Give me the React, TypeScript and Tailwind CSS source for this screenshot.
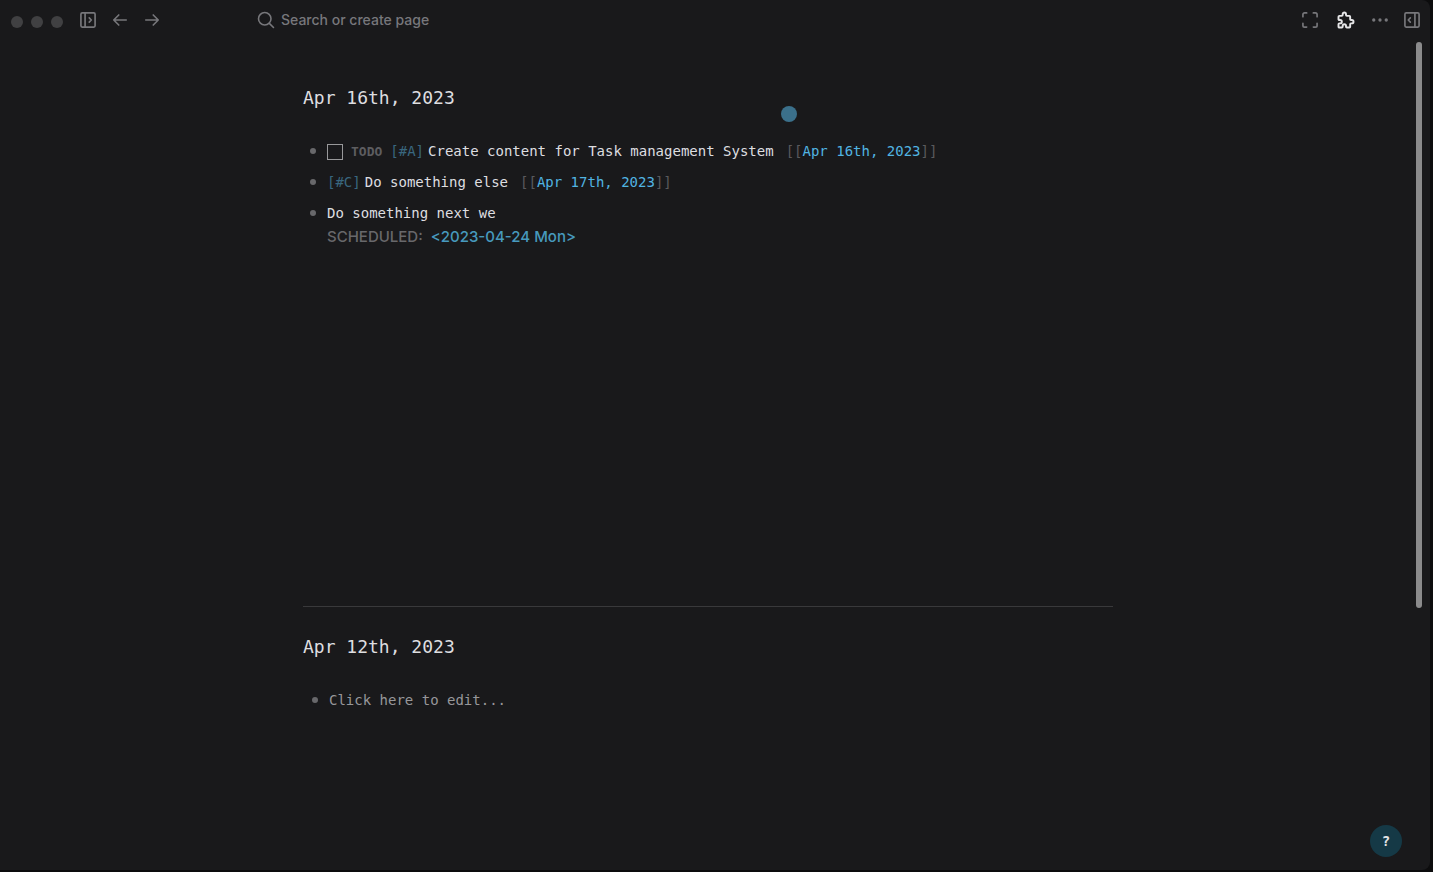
import type { ReactNode } from 'react';

const ICON = {
  fill: 'none',
  stroke: 'currentColor',
  strokeWidth: 2,
  strokeLinecap: 'round',
  strokeLinejoin: 'round',
  viewBox: '0 0 24 24',
  'aria-hidden': true,
} as const;

function IconButton({ label, children }: { label: string; children: ReactNode }) {
  return (
    <button type="button" aria-label={label} className="flex size-5 items-center justify-center">
      {children}
    </button>
  );
}

function Header() {
  return (
    <header className="flex h-10 items-center pr-2 pl-[11px] text-[#77777b]">
      <div className="flex w-[245px] items-center">
        <div className="mt-1 flex gap-2 text-[#404042]" aria-hidden="true">
          <span className="size-3 rounded-full bg-current" />
          <span className="size-3 rounded-full bg-current" />
          <span className="size-3 rounded-full bg-current" />
        </div>
        <nav className="ml-[15px] flex gap-3">
          <IconButton label="Toggle left sidebar">
            <svg {...ICON} className="size-5">
              <rect x="3.5" y="3.5" width="17" height="17" rx="1.5" />
              <path d="M8.5 3.5v17M13.5 9.5l2.5 2.5l-2.5 2.5" />
            </svg>
          </IconButton>
          <IconButton label="Go back">
            <svg {...ICON} className="size-5">
              <path d="M19.5 12H4.5M10.5 6L4.5 12l6 6" />
            </svg>
          </IconButton>
          <IconButton label="Go forward">
            <svg {...ICON} className="size-5">
              <path d="M4.5 12h15M13.5 6L19.5 12l-6 6" />
            </svg>
          </IconButton>
        </nav>
      </div>
      <button type="button" className="flex items-center gap-[5px] font-[Inter,sans-serif] text-sm font-medium">
        <svg {...ICON} className="size-5" strokeWidth={1.9}>
          <circle cx="10.5" cy="10.5" r="7.5" />
          <path d="M21 21L16 16" />
        </svg>
        Search or create page
      </button>
      <div className="ml-auto flex items-center gap-3">
        <IconButton label="Full screen">
          <svg {...ICON} className="size-5">
            <path d="M3.5 8V5.5a2 2 0 0 1 2-2H8M16 3.5h2.5a2 2 0 0 1 2 2V8M20.5 16v2.5a2 2 0 0 1-2 2H16M8 20.5H5.500a2 2 0 0 1-2-2V16" />
          </svg>
        </IconButton>
        <span className="mr-0.5 ml-1 flex text-[#e6e6e8]">
          <IconButton label="Plugins">
            <svg {...ICON} strokeWidth={2.3} className="size-5">
              <path d="M4 7h3a1 1 0 0 0 1-1V5a2 2 0 0 1 4 0v1a1 1 0 0 0 1 1h3a1 1 0 0 1 1 1v3a1 1 0 0 0 1 1h1a2 2 0 0 1 0 4h-1a1 1 0 0 0-1 1v3a1 1 0 0 1-1 1h-3a1 1 0 0 1-1-1v-1a2 2 0 0 0-4 0v1a1 1 0 0 1-1 1H4a1 1 0 0 1-1-1v-3a1 1 0 0 1 1-1h1a2 2 0 0 0 0-4H4a1 1 0 0 1-1-1V8a1 1 0 0 1 1-1" />
            </svg>
          </IconButton>
        </span>
        <IconButton label="More">
          <svg viewBox="0 0 24 24" className="size-5" fill="currentColor" aria-hidden="true">
            <circle cx="4.5" cy="12" r="2" />
            <circle cx="12" cy="12" r="2" />
            <circle cx="19.5" cy="12" r="2" />
          </svg>
        </IconButton>
        <IconButton label="Toggle right sidebar">
          <svg {...ICON} className="size-5">
            <rect x="3.5" y="3.5" width="17" height="17" rx="1.5" />
            <path d="M15.5 3.5v17M10 9.5L7.500 12l2.5 2.5" />
          </svg>
        </IconButton>
      </div>
    </header>
  );
}

function Block({ children }: { children: ReactNode }) {
  return (
    <li className="flex gap-[11px] py-1">
      <span className="mt-2 size-[6px] rounded-full bg-[#68686b]" aria-hidden="true" />
      <div>{children}</div>
    </li>
  );
}

function PageRef({ children }: { children: ReactNode }) {
  return (
    <span className="text-[#5a5a5d]">
      [[
      <a href="#page" className="text-[#51b4e2]">
        {children}
      </a>
      ]]
    </span>
  );
}

function Priority({ level }: { level: string }) {
  return (
    <a href="#priority" className="text-[#39677f]">
      [#{level}]
    </a>
  );
}

function Title({ children }: { children: ReactNode }) {
  return <h1 className="text-lg leading-7 text-[#dedee0]">{children}</h1>;
}

export default function App() {
  return (
    <div className="min-h-screen bg-[#0c0c0d] pr-[3px] pb-[2px]">
      <div className="relative min-h-[calc(100vh-2px)] rounded-r-lg bg-[#19191b] font-['DejaVu_Sans_Mono',monospace] text-sm leading-[23px] text-[#dedee0]">
        <Header />
        <div className="pr-[14px]">
          <main className="mx-auto max-w-[810px] pt-[44px]">
            <section className="min-h-[522px]">
              <Title>Apr 16th, 2023</Title>
              <ul className="mt-6 pl-[7px]">
                <Block>
                  <div className="flex items-center">
                    <input
                      type="checkbox"
                      aria-label="Create content for Task management System"
                      className="mr-2 size-4 appearance-none border border-[#98989a]"
                    />
                    <span className="mr-2 text-[13px] leading-[23px] font-bold text-[#5d5d60]">TODO</span>
                    <Priority level="A" />
                    <span className="mr-3 ml-1">Create content for Task management System</span>
                    <PageRef>Apr 16th, 2023</PageRef>
                  </div>
                </Block>
                <Block>
                  <div className="flex items-center">
                    <Priority level="C" />
                    <span className="mr-3 ml-1">Do something else</span>
                    <PageRef>Apr 17th, 2023</PageRef>
                  </div>
                </Block>
                <Block>
                  <div>Do something next we</div>
                  <div className="flex gap-2 font-[Inter,sans-serif] text-[15px] leading-[23px] font-medium text-[#68686b]">
                    <span>SCHEDULED:</span>
                    <a href="#scheduled" className="text-[#4799bd]">
                      &lt;2023-04-24 Mon&gt;
                    </a>
                  </div>
                </Block>
              </ul>
            </section>
            <section className="border-t border-[#39393b] pt-[26px]">
              <Title>Apr 12th, 2023</Title>
              <ul className="mt-6 pl-[9px] text-[#97979a]">
                <Block>Click here to edit...</Block>
              </ul>
            </section>
          </main>
        </div>
        <div className="absolute top-[42px] right-[8px] h-[65%] w-[6px] rounded-full bg-[#8b8b8c]" aria-hidden="true" />
        <div className="absolute top-[106px] left-[781px] size-4 rounded-full bg-[#3b708b]" aria-hidden="true" />
        <button
          type="button"
          aria-label="Help"
          className="absolute right-[28px] bottom-[13px] flex size-8 items-center justify-center rounded-full bg-[#153946] font-bold text-[#e4e4e6]"
        >
          ?
        </button>
      </div>
    </div>
  );
}
